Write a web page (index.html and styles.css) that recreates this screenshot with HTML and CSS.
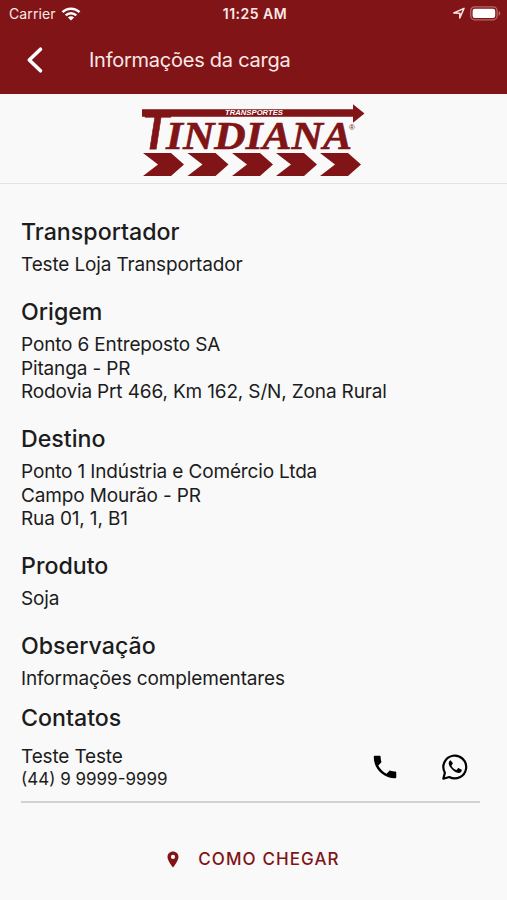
FILE: index.html
```html
<!DOCTYPE html>
<html lang="pt-BR">
<head>
  <meta charset="UTF-8">
  <meta name="viewport" content="width=device-width, initial-scale=1.0">
  <title>Informações da carga</title>
  <link rel="stylesheet" href="styles.css">
</head>
<body>
  <header>
    <div class="status-bar">
      <div class="status-left">
        <span class="carrier">Carrier</span>
        <svg class="wifi" width="20" height="14" viewBox="0 0 20 14" fill="none" stroke="#fff" stroke-width="2.5">
          <path d="M1.5 5.2C6.2.5 13.8.5 18.5 5.2"/>
          <path d="M4.7 8.4c3-2.9 7.6-2.9 10.6 0"/>
          <path d="M10 13.6 6.9 10.5c1.8-1.6 4.4-1.6 6.2 0z" fill="#fff" stroke="none"/>
        </svg>
      </div>
      <span class="clock">11:25 AM</span>
      <div class="status-right">
        <svg width="13" height="13" viewBox="0 0 13 13" fill="none" stroke="#fbe3e3" stroke-width="1.5" stroke-linejoin="round">
          <path d="M12 1.400 7.800 11V6.300L1.800 6z"/>
        </svg>
        <svg width="31" height="15" viewBox="0 0 31 15">
          <rect x=".7" y=".8" width="26.4" height="13" rx="4" fill="none" stroke="#b8686b" stroke-width="1.3"/>
          <rect x="2.6" y="2.7" width="22.6" height="9.2" rx="2.2" fill="#fff"/>
          <path d="M28.6 4.9c2.2.7 2.2 4.1 0 4.8z" fill="#b8686b"/>
        </svg>
      </div>
    </div>
    <div class="nav-bar">
      <button class="back" type="button" aria-label="Voltar">
        <svg width="18" height="28" viewBox="0 0 18 28" fill="none" stroke="#fff" stroke-width="3.6" stroke-linecap="round" stroke-linejoin="round">
          <path d="M14.5 3.2 3.3 14l11.2 10.8"/>
        </svg>
      </button>
      <h1>Informações da carga</h1>
    </div>
  </header>

  <div class="brand">
    <svg width="226" height="76" viewBox="0 0 226 76">
      <path d="M1 8.2h211V3.2l11.500 9.200-11.500 9.400v-6.1H1z"/>
      <text class="brand-small" x="84" y="14.1" textLength="58" lengthAdjust="spacingAndGlyphs">TRANSPORTES</text>
      <g transform="translate(1 47.500) scale(.78 1)">
        <text class="brand-t">T</text>
      </g>
      <text class="brand-name" x="25" y="47.700" textLength="186" lengthAdjust="spacingAndGlyphs">INDIANA</text>
      <text class="brand-mark" x="208" y="29">®</text>
      <path d="M2 52h28l13 11.500L30 75H2l15-11.500z"/>
      <path d="M46.500 52h28l13 11.500-13 11.500h-28l15-11.500z"/>
      <path d="M91 52h28l13 11.500-13 11.500h-28l15-11.500z"/>
      <path d="M135 52h28l13 11.500-13 11.500h-28l15-11.500z"/>
      <path d="M179 52h28l13 11.500-13 11.500h-28l15-11.500z"/>
    </svg>
  </div>

  <main>
    <section>
      <h2>Transportador</h2>
      <p>Teste Loja Transportador</p>
    </section>
    <section>
      <h2>Origem</h2>
      <p>Ponto 6 Entreposto SA</p>
      <p>Pitanga - PR</p>
      <p>Rodovia Prt 466, Km 162, S/N, Zona Rural</p>
    </section>
    <section>
      <h2>Destino</h2>
      <p>Ponto 1 Indústria e Comércio Ltda</p>
      <p>Campo Mourão - PR</p>
      <p>Rua 01, 1, B1</p>
    </section>
    <section>
      <h2>Produto</h2>
      <p>Soja</p>
    </section>
    <section>
      <h2>Observação</h2>
      <p>Informações complementares</p>
    </section>
    <section class="contacts">
      <h2>Contatos</h2>
      <div class="contact">
        <div class="contact-info">
          <p>Teste Teste</p>
          <p class="phone">(44) 9 9999-9999</p>
        </div>
        <div class="contact-actions">
          <svg width="30" height="30" viewBox="0 0 24 24">
            <path d="M6.620 10.790c1.440 2.830 3.760 5.140 6.590 6.590l2.200-2.200c.27-.27.670-.36 1.020-.24 1.120.37 2.330.57 3.570.57.550 0 1 .45 1 1V20c0 .55-.45 1-1 1-9.390 0-17-7.610-17-17 0-.55.450-1 1-1h3.500c.55 0 1 .45 1 1 0 1.250.2 2.450.57 3.570.11.350.030.740-.25 1.020l-2.200 2.200z"/>
          </svg>
          <svg width="26" height="26" viewBox="0 0 26 26">
            <path d="M2.900 18.700A11.400 11.400 0 1 1 7.300 23L1.300 24.700z" fill="none" stroke="#000" stroke-width="2.200" stroke-linejoin="round"/>
            <path d="M9.200 6.900c-.4-.7-1-.6-1.500-.1-1.700 1.700-1.100 4.200.8 6.800 2.500 3.400 5.400 5.400 8.200 5.400 1.700 0 3-1.300 3.100-2.700 0-.5-.1-.7-.5-.9l-2.500-1.200c-.4-.2-.7-.1-1 .3l-1 1.200c-.3.300-.6.300-1 .1-1.800-.8-3.300-2.200-4.200-3.900-.2-.4-.1-.6.2-.9l.8-1c.2-.3.200-.6.100-.9z"/>
          </svg>
        </div>
      </div>
    </section>
  </main>

  <button class="directions" type="button">
    <svg width="12" height="17" viewBox="0 0 12 17">
      <path d="M6 .5C2.900.5.5 2.900.5 5.900.5 9.800 6 16.500 6 16.500s5.500-6.700 5.500-10.600C11.500 2.900 9.100.5 6 .5zM6 8a2.100 2.100 0 1 1 0-4.200A2.100 2.100 0 0 1 6 8z"/>
    </svg>
    <span>COMO CHEGAR</span>
  </button>
</body>
</html>
```

FILE: styles.css
```css
* {
  box-sizing: border-box;
}

body {
  margin: 0;
  height: 900px;
  font-family: Inter, sans-serif;
  background: #f9f9f9;
  color: #1c1c1c;
  overflow: hidden;
}

h1,
h2,
p {
  margin: 0;
}

button {
  padding: 0;
  border: none;
  background: transparent;
  font-family: inherit;
  cursor: pointer;
}

svg {
  display: block;
}

header {
  height: 94px;
  background: #801416;
  color: #fbe9e7;
}

.status-bar {
  display: grid;
  grid-template-columns: 1fr auto 1fr;
  align-items: center;
  height: 27px;
  padding: 0 6px 0 9px;
  font-size: 14px;
}

.status-left,
.status-right {
  display: flex;
  align-items: center;
  gap: 5px;
}

.status-right {
  justify-content: flex-end;
}

.carrier {
  letter-spacing: 0.1px;
}

.clock {
  font-weight: 600;
  letter-spacing: 0.5px;
}

.nav-bar {
  display: flex;
  align-items: center;
  height: 66px;
  padding-left: 26px;
}

.back {
  width: 63px;
}

h1 {
  font-size: 20px;
  font-weight: 400;
  letter-spacing: -0.25px;
}

.brand {
  display: flex;
  justify-content: center;
  height: 90px;
  padding-top: 7px;
  border-bottom: 1px solid #e4e4e4;
}

.brand svg {
  fill: #801416;
  overflow: visible;
}

.brand-t {
  font-family: "Liberation Sans", sans-serif;
  font-size: 56px;
  font-weight: 700;
  font-style: italic;
  stroke: #801416;
  stroke-width: 0.8px;
}

.brand-name {
  font-family: "Liberation Serif", serif;
  font-size: 41px;
  font-weight: 700;
  font-style: italic;
  stroke: #801416;
  stroke-width: 0.6px;
}

.brand-small {
  font-family: "Liberation Sans", sans-serif;
  font-size: 6.5px;
  font-weight: 700;
  font-style: italic;
  fill: #fff;
}

.brand-mark {
  font-family: "Liberation Sans", sans-serif;
  font-size: 8px;
}

main {
  padding: 32px 27px 0 21px;
}

section {
  margin-bottom: 19.5px;
}

h2 {
  padding-bottom: 5px;
  font-size: 23.2px;
  font-weight: 500;
  line-height: 32px;
}

p {
  font-size: 19px;
  line-height: 23.5px;
  letter-spacing: -0.15px;
}

.contacts {
  margin: -8px 0 0;
}

.contact {
  display: flex;
  justify-content: space-between;
  height: 64px;
  padding-top: 6px;
  border-bottom: 2px solid #d2d2d2;
}

.phone {
  font-size: 17px;
  line-height: 20px;
  letter-spacing: 0;
}

.contact-actions {
  display: flex;
  align-items: center;
  gap: 42px;
  height: 44px;
  padding-right: 12px;
}

.directions {
  display: flex;
  align-items: center;
  gap: 19px;
  margin: 46px auto 0;
  color: #801416;
  font-size: 17px;
  font-weight: 500;
  letter-spacing: 1.1px;
}

.directions svg {
  fill: #801416;
}
```
